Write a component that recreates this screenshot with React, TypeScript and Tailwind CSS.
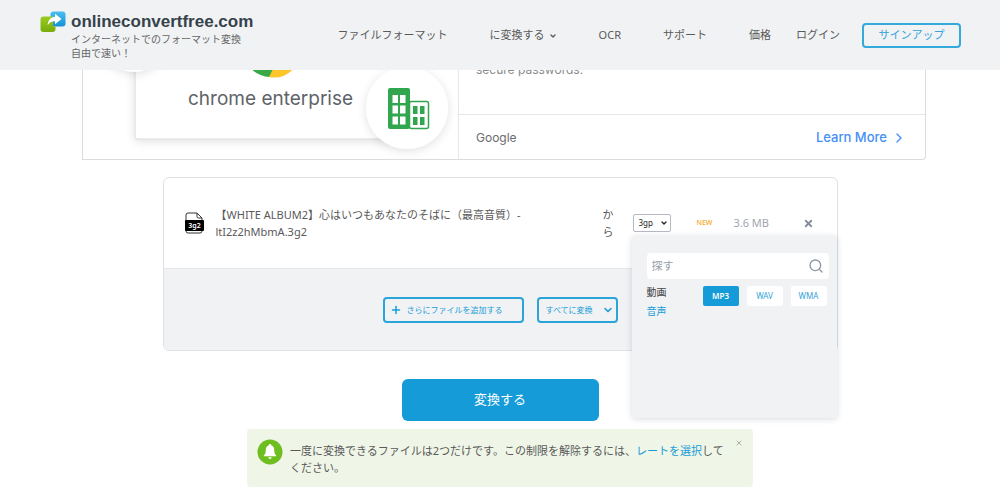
import { useState } from 'react';
import { ChevronDown, ChevronRight, Plus, Search, X } from 'lucide-react';
import clsx from 'clsx';

const categories = ['動画', '音声'];
const formats = ['MP3', 'WAV', 'WMA'];

function Logo() {
  return (
    <svg className="w-[26px] h-[22px] shrink-0" viewBox="0 0 26 22" aria-hidden="true">
      <defs>
        <linearGradient id="logoGreen" x1="0" y1="0" x2="0" y2="1">
          <stop offset="0" stopColor="#9ccb1f" />
          <stop offset="1" stopColor="#78aa0a" />
        </linearGradient>
        <linearGradient id="logoBlue" x1="0" y1="0" x2="0" y2="1">
          <stop offset="0" stopColor="#4bbfee" />
          <stop offset="1" stopColor="#1490d4" />
        </linearGradient>
      </defs>
      <rect x="10.5" y="0.5" width="15" height="15" rx="3" fill="url(#logoBlue)" />
      <path
        d="M3.500 5.500h9.500V15.500H15.500V18a3 3 0 0 1-3 3H3.500a3 3 0 0 1-3-3V8.500a3 3 0 0 1 3-3z"
        fill="url(#logoGreen)"
      />
      <path d="M15 2.800l6.500 5.200-6.500 5.200v-2.900c-3.300 0-5.300 1-7.300 3.900.2-5 3-8 7.300-8.400z" fill="#fff" />
    </svg>
  );
}

function Header() {
  return (
    <header className="flex h-[70px] items-start bg-[#f0f2f4] pl-10 pr-[39px]">
      <a href="#" className="flex items-start gap-[5px] pt-[11px]">
        <Logo />
        <span className="block">
          <span className="block font-['Liberation_Sans',sans-serif] text-[17px] font-bold leading-[21px] text-[#36424a]">
            onlineconvertfree.com
          </span>
          <span className="block text-[10px] leading-[14px] text-[#666]">
            インターネットでのフォーマット変換
            <br />
            自由で速い！
          </span>
        </span>
      </a>

      <div className="ml-auto flex items-center whitespace-nowrap pt-[23px] text-[11px] text-[#5a5a5a]">
        <nav className="flex items-center gap-[42px]">
          <a href="#">ファイルフォーマット</a>
          <button className="flex items-center gap-1">
            に変換する
            <ChevronDown className="w-2 h-2" strokeWidth={4} />
          </button>
          <a href="#">OCR</a>
          <a href="#">サポート</a>
          <a href="#">価格</a>
        </nav>
        <a href="#" className="ml-[25px]">ログイン</a>
        <button className="ml-[22px] h-[25px] w-[99px] rounded border-2 border-[#33a9dc] text-[#33a3dc]">
          サインアップ
        </button>
      </div>
    </header>
  );
}

function EnterpriseArt() {
  return (
    <svg className="absolute left-0 top-0 w-[376px] h-[90px]" viewBox="0 0 376 90" aria-hidden="true">
      <defs>
        <filter id="soft" x="-20%" y="-20%" width="140%" height="150%">
          <feDropShadow dx="0" dy="2" stdDeviation="5" floodColor="#000" floodOpacity="0.12" />
        </filter>
      </defs>
      <rect x="52" y="-60" width="280" height="129" rx="2" fill="#fff" stroke="#d8d8d8" filter="url(#soft)" />
      <circle cx="51" cy="-30" r="32" fill="#fff" filter="url(#soft)" />
      {/* Chrome disc */}
      <circle cx="187" cy="-18" r="25" fill="#3aa845" />
      <path d="M186 7L193 -7h20v2a25 25 0 0 1-27 12z" fill="#fcc52c" />
      <circle cx="324" cy="38" r="41" fill="#fff" filter="url(#soft)" />
      {/* Buildings */}
      <rect x="305" y="18" width="22" height="41" rx="2" fill="#31a64e" />
      <rect x="326.500" y="31.500" width="19" height="27" rx="2" fill="#fff" stroke="#31a64e" strokeWidth="1.500" />
      <g fill="#fff">
        <rect x="309.500" y="25" width="5.500" height="8" />
        <rect x="317" y="25" width="5.500" height="8" />
        <rect x="309.500" y="35.500" width="5.500" height="8" />
        <rect x="317" y="35.500" width="5.500" height="8" />
        <rect x="309.500" y="46.500" width="5.500" height="8" />
        <rect x="317" y="46.500" width="5.500" height="8" />
      </g>
      <g fill="#31a64e">
        <rect x="330" y="36" width="4.500" height="8" />
        <rect x="337" y="36" width="4.500" height="8" />
        <rect x="330" y="47" width="4.500" height="8" />
        <rect x="337" y="47" width="4.500" height="8" />
      </g>
    </svg>
  );
}

function AdBanner() {
  return (
    <section className="ml-[82px] mr-[74px] flex h-[90px] overflow-hidden rounded-br border border-t-0 border-[#dcdcdc] font-['Inter',sans-serif]">
      <div className="relative w-[376px] shrink-0 border-r border-[#e6e6e6]">
        <EnterpriseArt />
        <p className="relative pl-[105px] pt-[15px] text-[19px] leading-7 text-[#5f6368]">chrome enterprise</p>
      </div>
      <div className="flex flex-1 flex-col">
        <div className="h-[45px] border-b border-[#e6e6e6] pl-[17px]">
          <p className="-mt-[10px] text-[12px] leading-5 text-[#8a8a8a]">secure passwords.</p>
        </div>
        <div className="flex flex-1 items-center justify-between pl-[17px] pr-[18px] pt-px">
          <span className="text-[12px] text-[#6b6b6b]">Google</span>
          <a href="#" className="flex items-center gap-1 text-[13px] font-medium text-[#4590f5]">
            Learn More
            <ChevronRight className="w-4 h-4" strokeWidth={2} />
          </a>
        </div>
      </div>
    </section>
  );
}

function FileIcon() {
  return (
    <svg className="w-[19px] h-[22px] shrink-0" viewBox="0 0 19 22" aria-hidden="true">
      <path d="M3 1h9l5 5v13a2 2 0 0 1-2 2H3a2 2 0 0 1-2-2V3a2 2 0 0 1 2-2z" fill="#fff" stroke="#333" />
      <path d="M12 1v3.500a1.500 1.500 0 0 0 1.500 1.500H17" fill="none" stroke="#333" />
      <rect x="0" y="8" width="19" height="11" rx="1" fill="#000" />
      <text x="9.500" y="16" textAnchor="middle" fontSize="7" fontWeight="600" fill="#fff">3g2</text>
    </svg>
  );
}

function FormatPanel() {
  const [category, setCategory] = useState('音声');
  const [format, setFormat] = useState('MP3');

  return (
    <div className="absolute -left-px top-[22px] z-10 h-[182px] w-[205px] rounded bg-[#f0f2f4] pl-[15px] pr-2 pt-[17px] shadow-[0_1px_6px_rgba(60,70,100,0.2)]">
      <label className="flex h-[26px] items-center rounded bg-white pl-[5px] pr-[5px]">
        <input
          type="text"
          aria-label="探す"
          placeholder="探す"
          className="min-w-0 flex-1 text-[11px] text-[#555] outline-none placeholder:text-[#999fa8]"
        />
        <Search className="w-4 h-4 text-[#8c97a5]" strokeWidth={2} />
      </label>
      <div className="flex items-start justify-between pr-[2px] pt-1">
        <div className="flex flex-col items-start text-[10px] leading-[19px]">
          {categories.map((name) => (
            <button
              key={name}
              onClick={() => setCategory(name)}
              className={name === category ? 'text-[#189cd8]' : 'text-[#444]'}
            >
              {name}
            </button>
          ))}
        </div>
        <div className="flex gap-2 pt-[3px]">
          {formats.map((name) => (
            <button
              key={name}
              onClick={() => setFormat(name)}
              className={clsx(
                'h-5 w-[36px] rounded-xs text-[8px]',
                name === format ? 'bg-[#159bd8] font-semibold text-white' : 'bg-white text-[#33a3d8]',
              )}
            >
              {name}
            </button>
          ))}
        </div>
      </div>
    </div>
  );
}

function FileRow() {
  return (
    <div className="flex h-[90px] items-center pl-[21px] pr-[23px] text-[11px] text-[#5a5a5a]">
      <FileIcon />
      <p className="ml-3 w-[376px] leading-[17px]">
        【WHITE ALBUM2】心はいつもあなたのそばに（最高音質）-
        <br />
        ltI2z2hMbmA.3g2
      </p>
      <p className="ml-[11px] w-3 leading-[17px]">から</p>
      <div className="relative ml-[18px]">
        <select
          aria-label="フォーマット"
          className="block h-[18px] w-[38px] appearance-none rounded-xs border border-[#b5bac4] bg-white pl-[5px] text-[8px] text-[#222]"
        >
          <option>3gp</option>
        </select>
        <ChevronDown className="pointer-events-none absolute right-[3px] top-[5px] w-2 h-2 text-[#222]" strokeWidth={4} />
        <FormatPanel />
      </div>
      <span className="ml-[26px] text-[7px] font-medium text-[#f5a623]">NEW</span>
      <span className="ml-[21px] whitespace-nowrap text-[#a0a5ad]">3.6 MB</span>
      <button aria-label="削除" className="ml-auto">
        <X className="w-[11px] h-[11px] text-[#858d99]" strokeWidth={4} />
      </button>
    </div>
  );
}

function ConvertCard() {
  return (
    <section className="mx-auto mt-[17px] w-full max-w-[675px] rounded-md border border-[#dfe1e4]">
      <FileRow />
      <div className="flex h-[82px] items-center justify-center gap-[13px] rounded-b-md border-t border-[#e4e6e9] bg-[#f0f2f4] text-[8px] text-[#189cd8]">
        <button className="flex h-[26px] w-[141px] items-center gap-[5px] rounded border-2 border-[#2ba4da] pl-[5px]">
          <Plus className="w-3 h-3" strokeWidth={3} />
          さらにファイルを追加する
        </button>
        <div className="relative">
          <select
            aria-label="すべてに変換"
            className="block h-[26px] w-[81px] appearance-none rounded border-2 border-[#2ba4da] pl-[7px]"
          >
            <option>すべてに変換</option>
          </select>
          <ChevronDown className="pointer-events-none absolute right-1 top-[7px] w-3 h-3" strokeWidth={3} />
        </div>
      </div>
    </section>
  );
}

function Notice() {
  return (
    <div className="mx-auto mt-2 flex w-full max-w-[506px] items-start rounded-sm bg-[#eff5e7] p-[10px]">
      <svg className="w-[26px] h-[26px] shrink-0" viewBox="0 0 26 26" aria-hidden="true">
        <circle cx="13" cy="13" r="12.500" fill="#6fbe1f" />
        <path
          d="M13 5a1.200 1.200 0 0 1 1.200 1.300c2 .6 3 2.300 3 4.500 0 3 .6 4.500 2 5.700v.8H6.800v-.8c1.400-1.200 2-2.700 2-5.700 0-2.200 1-3.900 3-4.500A1.200 1.200 0 0 1 13 5zM11.300 18.300h3.400a1.700 1.700 0 0 1-3.400 0z"
          fill="#fff"
        />
      </svg>
      <p className="ml-[7px] flex-1 pb-px pt-[3px] text-[11px] leading-[17px] text-[#5a5a5a]">
        一度に変換できるファイルは2つだけです。この制限を解除するには、
        <a href="#" className="text-[#189cd8]">レートを選択</a>して
        <br />
        ください。
      </p>
      <button aria-label="閉じる">
        <X className="w-2 h-2 text-[#aab0a6]" strokeWidth={3} />
      </button>
    </div>
  );
}

export default function App() {
  return (
    <div className="bg-white font-['Noto_Sans','Noto_Sans_CJK_JP',sans-serif]" lang="ja">
      <Header />
      <main>
        <AdBanner />
        <ConvertCard />
        <button className="mx-auto mt-7 block h-[42px] w-[197px] rounded-md bg-[#159bd8] text-[13px] text-white">
          変換する
        </button>
        <Notice />
      </main>
    </div>
  );
}
